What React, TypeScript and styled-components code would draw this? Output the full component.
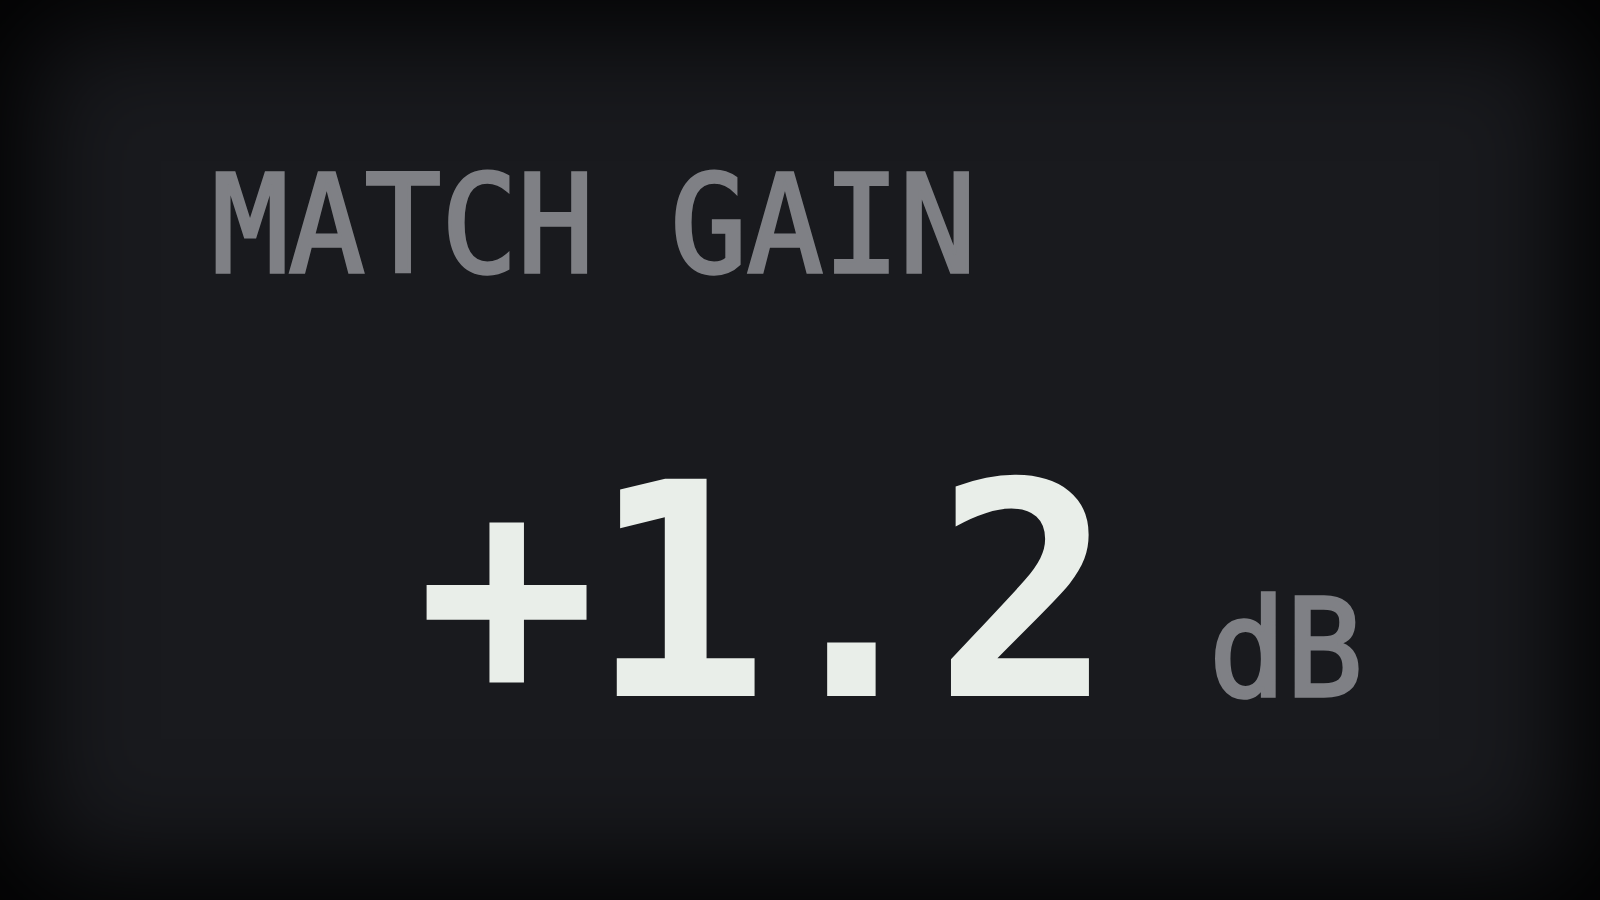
import styled, { createGlobalStyle } from 'styled-components'

const GlobalStyle = createGlobalStyle`
  html, body {
    margin: 0;
    padding: 0;
    background: #000;
  }
`

const Meter = styled.div`
  width: 100vw;
  height: 100vh;
  box-sizing: border-box;
  padding: 158px 0 0 212px;
  background: #191a1e;
  box-shadow: inset 0 0 110px 30px rgba(0, 0, 0, 0.95);
  font-family: 'DejaVu Sans Mono', 'Liberation Mono', monospace;
  display: flex;
  flex-direction: column;
  align-items: flex-start;
`

// condensed mono caption: regular weight, squeezed and lightly thickened
const Label = styled.div`
  font-size: 135px;
  line-height: 1;
  color: #7f8085;
  -webkit-text-stroke: 3.5px #7f8085;
  white-space: pre;
  transform: scaleX(0.94);
  transform-origin: left center;
`

const ValueRow = styled.div`
  margin-top: 151px;
  padding-left: 205px;
  display: flex;
  align-items: baseline;
`

const Value = styled.span`
  font-size: 298px;
  font-weight: 700;
  line-height: 1;
  letter-spacing: -7px;
  color: #e9eee9;
`

const Unit = styled.span<{ $gap: number }>`
  margin-left: ${p => p.$gap}px;
  font-size: 135px;
  line-height: 1;
  color: #7f8085;
  -webkit-text-stroke: 3.5px #7f8085;
  transform: scaleX(0.946);
  transform-origin: left center;
`

export default function App() {
  const gain = 1.2
  return (
    <>
      <GlobalStyle />
      <Meter>
        <Label>MATCH GAIN</Label>
        <ValueRow>
          <Value>{gain >= 0 ? '+' : ''}{gain.toFixed(1)}</Value>
          <Unit $gap={102}>dB</Unit>
        </ValueRow>
      </Meter>
    </>
  )
}
